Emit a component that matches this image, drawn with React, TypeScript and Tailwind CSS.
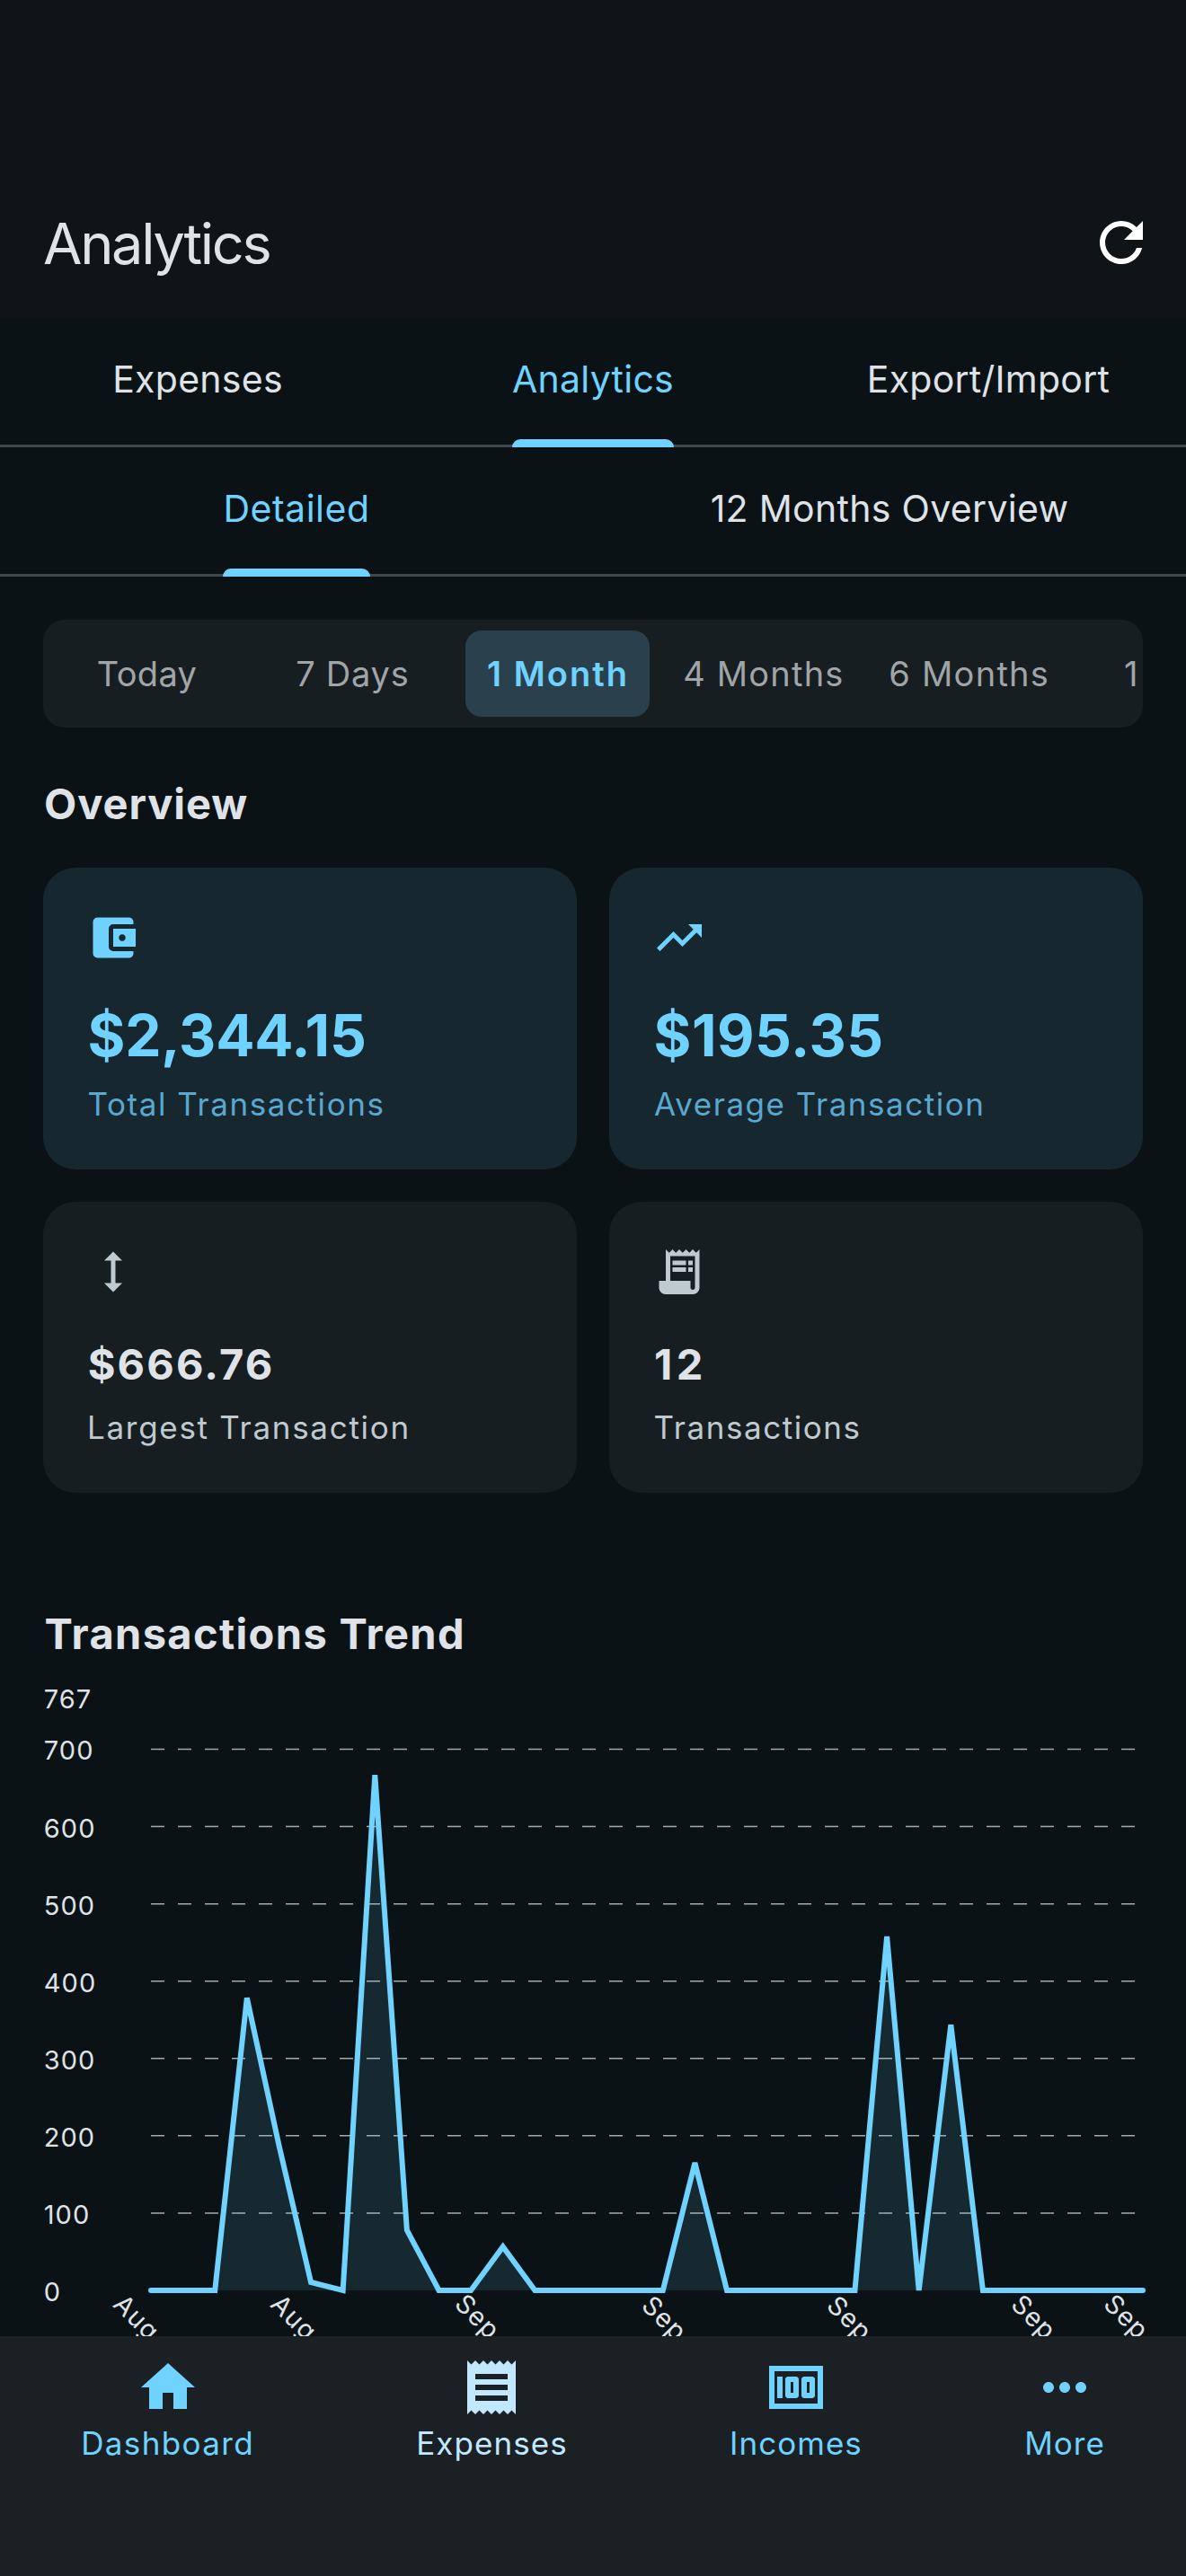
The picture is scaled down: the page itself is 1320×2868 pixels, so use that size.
import React from "react";
import {
  MdAccountBalanceWallet,
  MdHeight,
  MdHome,
  MdMoney,
  MdMoreHoriz,
  MdReceipt,
  MdReceiptLong,
  MdRefresh,
  MdTrendingUp,
} from "react-icons/md";
import type { IconType } from "react-icons";

type Tab = { label: string; tracking: string; active?: boolean };

const mainTabs: Tab[] = [
  { label: "Expenses", tracking: "tracking-[0.27px]" },
  { label: "Analytics", tracking: "tracking-[0.24px]", active: true },
  { label: "Export/Import", tracking: "tracking-[0.26px]" },
];

const subTabs: Tab[] = [
  { label: "Detailed", tracking: "tracking-[0.52px]", active: true },
  { label: "12 Months Overview", tracking: "tracking-[0.31px]" },
];

function TabBar({ tabs, columns }: { tabs: Tab[]; columns: string }) {
  return (
    <nav className={`grid h-36 shadow-[inset_0_-3px_0_#41474d] ${columns}`}>
      {tabs.map((tab) => (
        <button key={tab.label} className="flex justify-center">
          <span className="flex flex-col">
            <span
              className={`flex h-[135px] items-center whitespace-nowrap pt-0.5 text-[41px] ${tab.tracking} ${
                tab.active ? "text-[#6fd2ff]" : "text-[#dfe2e7]"
              }`}
            >
              {tab.label}
            </span>
            {tab.active && <span className="h-[9px] rounded-t-[9px] bg-[#6fd2ff]" />}
          </span>
        </button>
      ))}
    </nav>
  );
}

const ranges: Tab[] = [
  { label: "Today", tracking: "tracking-[0.35px]" },
  { label: "7 Days", tracking: "tracking-[0.75px]" },
  { label: "1 Month", tracking: "tracking-[2.04px]", active: true },
  { label: "4 Months", tracking: "tracking-[1.2px]" },
  { label: "6 Months", tracking: "tracking-[1.27px]" },
  { label: "1 Year", tracking: "tracking-[1px]" },
];

function RangePicker() {
  return (
    <div className="mt-12 flex h-[120px] items-center gap-[23.8px] overflow-hidden rounded-3xl bg-[#171e21] pl-3">
      {ranges.map((r) => (
        <button
          key={r.label}
          className={`flex h-24 w-[205px] shrink-0 items-center justify-center whitespace-nowrap rounded-[18px] pl-0.5 text-[38px] ${r.tracking} ${
            r.active ? "bg-[#2a404d] font-semibold text-[#6fd2ff]" : "text-[#a0a5a8]"
          }`}
        >
          {r.label}
        </button>
      ))}
    </div>
  );
}

type Stat = { icon: IconType; value: string; valueClass: string; label: string; labelClass: string };

const primaryStats: Stat[] = [
  {
    icon: MdAccountBalanceWallet,
    value: "$2,344.15",
    valueClass: "tracking-[-0.2px]",
    label: "Total Transactions",
    labelClass: "ml-[1.5px] tracking-[1.57px]",
  },
  {
    icon: MdTrendingUp,
    value: "$195.35",
    valueClass: "tracking-[0.5px]",
    label: "Average Transaction",
    labelClass: "ml-0.5 tracking-[1.52px]",
  },
];

const secondaryStats: Stat[] = [
  {
    icon: MdHeight,
    value: "$666.76",
    valueClass: "ml-[1.7px] tracking-[2.15px]",
    label: "Largest Transaction",
    labelClass: "ml-px tracking-[1.7px]",
  },
  {
    icon: MdReceiptLong,
    value: "12",
    valueClass: "ml-0.5 tracking-[4.5px]",
    label: "Transactions",
    labelClass: "ml-[1.6px] tracking-[1.55px]",
  },
];

function PrimaryCard({ icon: Icon, value, valueClass, label, labelClass }: Stat) {
  return (
    <article className="h-[336px] rounded-[36px] bg-[#17272f] p-12 text-[#6fd2ff]">
      <Icon className="size-[60px]" />
      <p className={`ml-[1.5px] mt-10 text-[64px] font-bold leading-[78px] ${valueClass}`}>{value}</p>
      <p className={`mt-[13px] text-[35px] leading-[48px] text-[#5aa8cf] ${labelClass}`}>{label}</p>
    </article>
  );
}

function SecondaryCard({ icon: Icon, value, valueClass, label, labelClass }: Stat) {
  return (
    <article className="h-[324px] rounded-[36px] bg-[#171e21] p-12 text-[#bfc9d0]">
      <Icon className="size-[60px]" />
      <p className={`mt-[43px] text-[47px] font-bold leading-[60px] text-[#dfe2e7] ${valueClass}`}>{value}</p>
      <p className={`mt-4 text-[35px] leading-[48px] ${labelClass}`}>{label}</p>
    </article>
  );
}

/* One value per day; the axis tops out at 15% over the largest. */
const daily = [
  0, 0, 0, 378.4, 187.7, 10.5, 0, 666.76, 78, 0, 0, 56.5, 0, 0, 0, 0, 0, 165, 0, 0, 0, 0, 0, 457.7, 0, 343.6, 0, 0, 0,
  0, 0, 0,
];
const baseY = 701;
const leftX = 168;
const rightX = 1272;
const yOf = (v: number) => baseY - v * 0.86075;
const xOf = (i: number) => leftX + (i * (rightX - leftX)) / (daily.length - 1);

const gridValues = [100, 200, 300, 400, 500, 600, 700];
const axisValues = [0, ...gridValues, 767];
const dateLabels = [
  { text: "Aug", x: 124.5, y: 718 },
  { text: "Aug", x: 299.6, y: 718 },
  { text: "Sep", x: 504.6, y: 717.5 },
  { text: "Sep", x: 712.6, y: 719.4 },
  { text: "Sep", x: 918.5, y: 719.4 },
  { text: "Sep", x: 1123.7, y: 718.2 },
  { text: "Sep", x: 1226.7, y: 717.7 },
];

function TrendChart() {
  const points = daily.map((v, i) => `${xOf(i).toFixed(2)},${yOf(v).toFixed(2)}`).join(" ");
  return (
    <svg viewBox="0 0 1320 752" className="block h-[752px] w-[1320px]">
      {gridValues.map((v) => (
        <line
          key={v}
          x1={leftX}
          x2={rightX - 6}
          y1={yOf(v)}
          y2={yOf(v)}
          stroke="#a6a9ab"
          strokeWidth={1.5}
          strokeDasharray="15 15"
        />
      ))}
      <polygon points={`${leftX},${baseY} ${points} ${rightX},${baseY}`} fill="#6fd2ff" fillOpacity={0.12} />
      <polyline points={points} fill="none" stroke="#6fd2ff" strokeWidth={6} strokeLinecap="round" />
      <g fill="#dfe2e7" fontSize={29} letterSpacing={1.1}>
        {axisValues.map((v) => (
          <text key={v} x={48.7} y={yOf(v) + 12}>
            {v}
          </text>
        ))}
        {dateLabels.map((d) => (
          <text key={d.x} transform={`translate(${d.x} ${d.y}) rotate(45)`}>
            {d.text}
          </text>
        ))}
      </g>
    </svg>
  );
}

const navItems = [
  { icon: MdHome, label: "Dashboard", style: "text-[#6fd2ff] tracking-[1.36px]" },
  { icon: MdReceipt, label: "Expenses", style: "text-[#c1e8ff] tracking-[1.05px]" },
  { icon: MdMoney, label: "Incomes", style: "text-[#6fd2ff] tracking-[1.03px]" },
  { icon: MdMoreHoriz, label: "More", style: "text-[#6fd2ff] tracking-[1px]" },
];

export default function App() {
  return (
    <div className="flex h-[2868px] w-[1320px] flex-col overflow-hidden bg-[#0b1215] font-[Inter,sans-serif] text-[#dfe2e7]">
      <header className="flex h-[354px] shrink-0 items-center justify-between bg-[#0f1418] pl-12 pr-9 pt-[186px]">
        <h1 className="pt-0.5 text-[63px] leading-[84px] tracking-[-2.3px]">Analytics</h1>
        <button className="text-white">
          <MdRefresh className="size-[72px]" />
        </button>
      </header>

      <TabBar tabs={mainTabs} columns="grid-cols-3" />
      <TabBar tabs={subTabs} columns="grid-cols-2" />

      <main className="min-h-0 flex-1 overflow-hidden">
        <div className="px-12">
          <RangePicker />
          <h2 className="ml-px mt-[55px] text-[47px] font-bold leading-[60px] tracking-[0.95px]">Overview</h2>
          <section className="mt-[41px] grid grid-cols-2 gap-9">
            {primaryStats.map((s) => (
              <PrimaryCard key={s.label} {...s} />
            ))}
            {secondaryStats.map((s) => (
              <SecondaryCard key={s.label} {...s} />
            ))}
          </section>
          <h2 className="ml-[1.5px] mt-[127px] text-[47px] font-bold leading-[60px] tracking-[1.35px]">
            Transactions Trend
          </h2>
        </div>
        <TrendChart />
      </main>

      <footer className="flex h-[267px] shrink-0 items-start justify-around bg-[#1b2024] pt-[21px]">
        {navItems.map(({ icon: Icon, label, style }) => (
          <button key={label} className={`flex flex-col items-center gap-0.5 text-[35px] leading-[48px] ${style}`}>
            <Icon className="size-[72px]" />
            <span>{label}</span>
          </button>
        ))}
      </footer>
    </div>
  );
}
